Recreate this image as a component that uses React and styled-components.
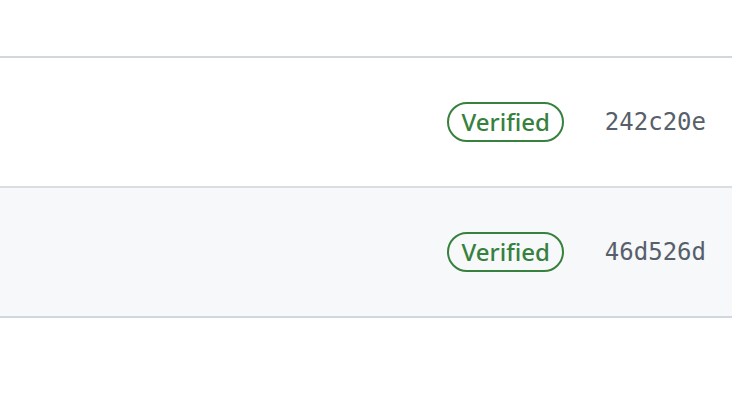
import styled, { createGlobalStyle } from "styled-components";

const GlobalStyle = createGlobalStyle`
  html, body {
    margin: 0;
    padding: 0;
    background: #ffffff;
  }
`;

const Page = styled.div`
  width: 732px;
  height: 402px;
  overflow: hidden;
  padding-top: 56px;
  box-sizing: border-box;
  font-family: "Noto Sans", "Liberation Sans", sans-serif;
`;

const CommitList = styled.ul`
  list-style: none;
  margin: 0;
  padding: 0;
  border-top: 2px solid #d0d7de;
`;

const CommitRow = styled.li`
  height: 128px;
  display: flex;
  align-items: center;
  justify-content: flex-end;
  padding-right: 26px;
  background: ${(p) => (p.$alt ? "#f6f8fa" : "#ffffff")};
  border-bottom: 2px solid ${(p) => (p.$last ? "#d0d7de" : "#d8dee4")};
`;

const VerifiedBadge = styled.span`
  display: inline-flex;
  align-items: center;
  height: 40px;
  box-sizing: border-box;
  padding: 0 12px;
  border: 2px solid #37803d;
  border-radius: 20px;
  color: #37803d;
  font-size: 24px;
  font-weight: 500;
  line-height: 1;
  margin-right: 41px;
`;

const Sha = styled.a`
  font-family: "DejaVu Sans Mono", "Liberation Mono", monospace;
  font-size: 24px;
  color: #57606a;
  text-decoration: none;
`;

const commits = [
  { sha: "242c20e" },
  { sha: "46d526d" },
];

export default function App() {
  return (
    <>
      <GlobalStyle />
      <Page>
        <CommitList>
          {commits.map((c, i) => (
            <CommitRow key={c.sha} $alt={i % 2 === 1} $last={i === commits.length - 1}>
              <VerifiedBadge>Verified</VerifiedBadge>
              <Sha href="#">{c.sha}</Sha>
            </CommitRow>
          ))}
        </CommitList>
      </Page>
    </>
  );
}
